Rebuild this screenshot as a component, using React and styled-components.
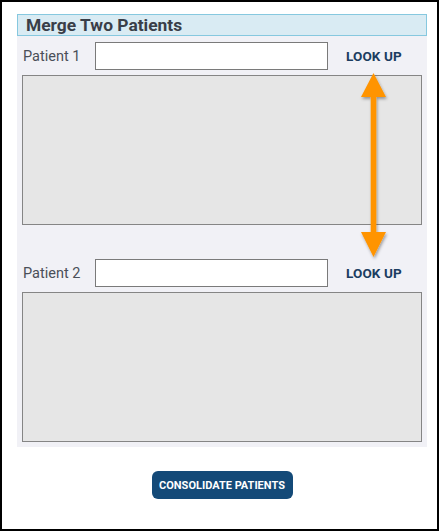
import styled, { createGlobalStyle } from 'styled-components';

const GlobalStyle = createGlobalStyle`
  html, body {
    margin: 0;
    padding: 0;
    background: #ffffff;
  }
  * {
    box-sizing: border-box;
  }
`;

const Frame = styled.div`
  width: 439px;
  height: 531px;
  border: 2px solid #000000;
  padding: 12px 10px 0 15px;
  font-family: Roboto, 'Liberation Sans', sans-serif;
  position: relative;
`;

const Panel = styled.section`
  width: 410px;
  background: #f1f1f6;
  padding-bottom: 5px;
`;

const Header = styled.h1`
  margin: 0;
  height: 22px;
  background: #d9ebf3;
  border: 1px solid #86c8df;
  padding: 0 8px;
  font-size: 17.4px;
  font-weight: 700;
  line-height: 20px;
  color: #393e48;
`;

const Body = styled.div`
  padding: 6px 5px 0 5px;
  display: flex;
  flex-direction: column;
`;

const Row = styled.div`
  display: flex;
  align-items: center;
  height: 28px;
  margin-top: ${(p) => p.$top || 0}px;
`;

const Label = styled.label`
  width: 73px;
  padding-left: 1px;
  font-size: 14.5px;
  color: #4a4f58;
`;

const TextInput = styled.input`
  width: 233px;
  height: 28px;
  border: 1px solid #7a7a7a;
  background: #ffffff;
  outline: none;
  padding: 0 6px;
`;

const LookUp = styled.button`
  margin-left: 18px;
  border: none;
  background: none;
  padding: 0;
  font-family: inherit;
  font-size: 13.5px;
  font-weight: 700;
  color: #1b3d60;
  letter-spacing: 0.1px;
`;

const Results = styled.div`
  margin-top: 5px;
  height: 150px;
  background: #e6e6e6;
  border: 1px solid #858585;
`;

const Footer = styled.div`
  width: 410px;
  display: flex;
  justify-content: center;
  padding-top: 24px;
`;

const Consolidate = styled.button`
  height: 28px;
  width: 141px;
  border: none;
  border-radius: 6px;
  background: #144a78;
  color: #ffffff;
  font-family: inherit;
  font-size: 11px;
  font-weight: 700;
  padding: 0;
`;

const Arrow = styled.svg`
  position: absolute;
  left: 356px;
  top: 68px;
  overflow: visible;
`;

const App = () => {
  return (
    <>
      <GlobalStyle />
      <Frame>
        <Panel>
          <Header>Merge Two Patients</Header>
          <Body>
            <Row>
              <Label htmlFor="p1">Patient 1</Label>
              <TextInput id="p1" type="text" />
              <LookUp>LOOK UP</LookUp>
            </Row>
            <Results />
            <Row $top={34}>
              <Label htmlFor="p2">Patient 2</Label>
              <TextInput id="p2" type="text" />
              <LookUp>LOOK UP</LookUp>
            </Row>
            <Results />
          </Body>
        </Panel>
        <Footer>
          <Consolidate>CONSOLIDATE PATIENTS</Consolidate>
        </Footer>
        <Arrow width="32" height="192" viewBox="0 0 32 192">
          <defs>
            <filter id="sh" x="-50%" y="-20%" width="200%" height="140%">
              <feDropShadow dx="1" dy="2" stdDeviation="1.5" floodColor="#000" floodOpacity="0.35" />
            </filter>
          </defs>
          <g filter="url(#sh)" fill="#ff9400">
            <polygon points="15.5,3 28,27 3,27" />
            <rect x="12.7" y="26" width="5.6" height="137" />
            <polygon points="3,162 28,162 15.5,187" />
          </g>
        </Arrow>
      </Frame>
    </>
  );
};

export default App;
